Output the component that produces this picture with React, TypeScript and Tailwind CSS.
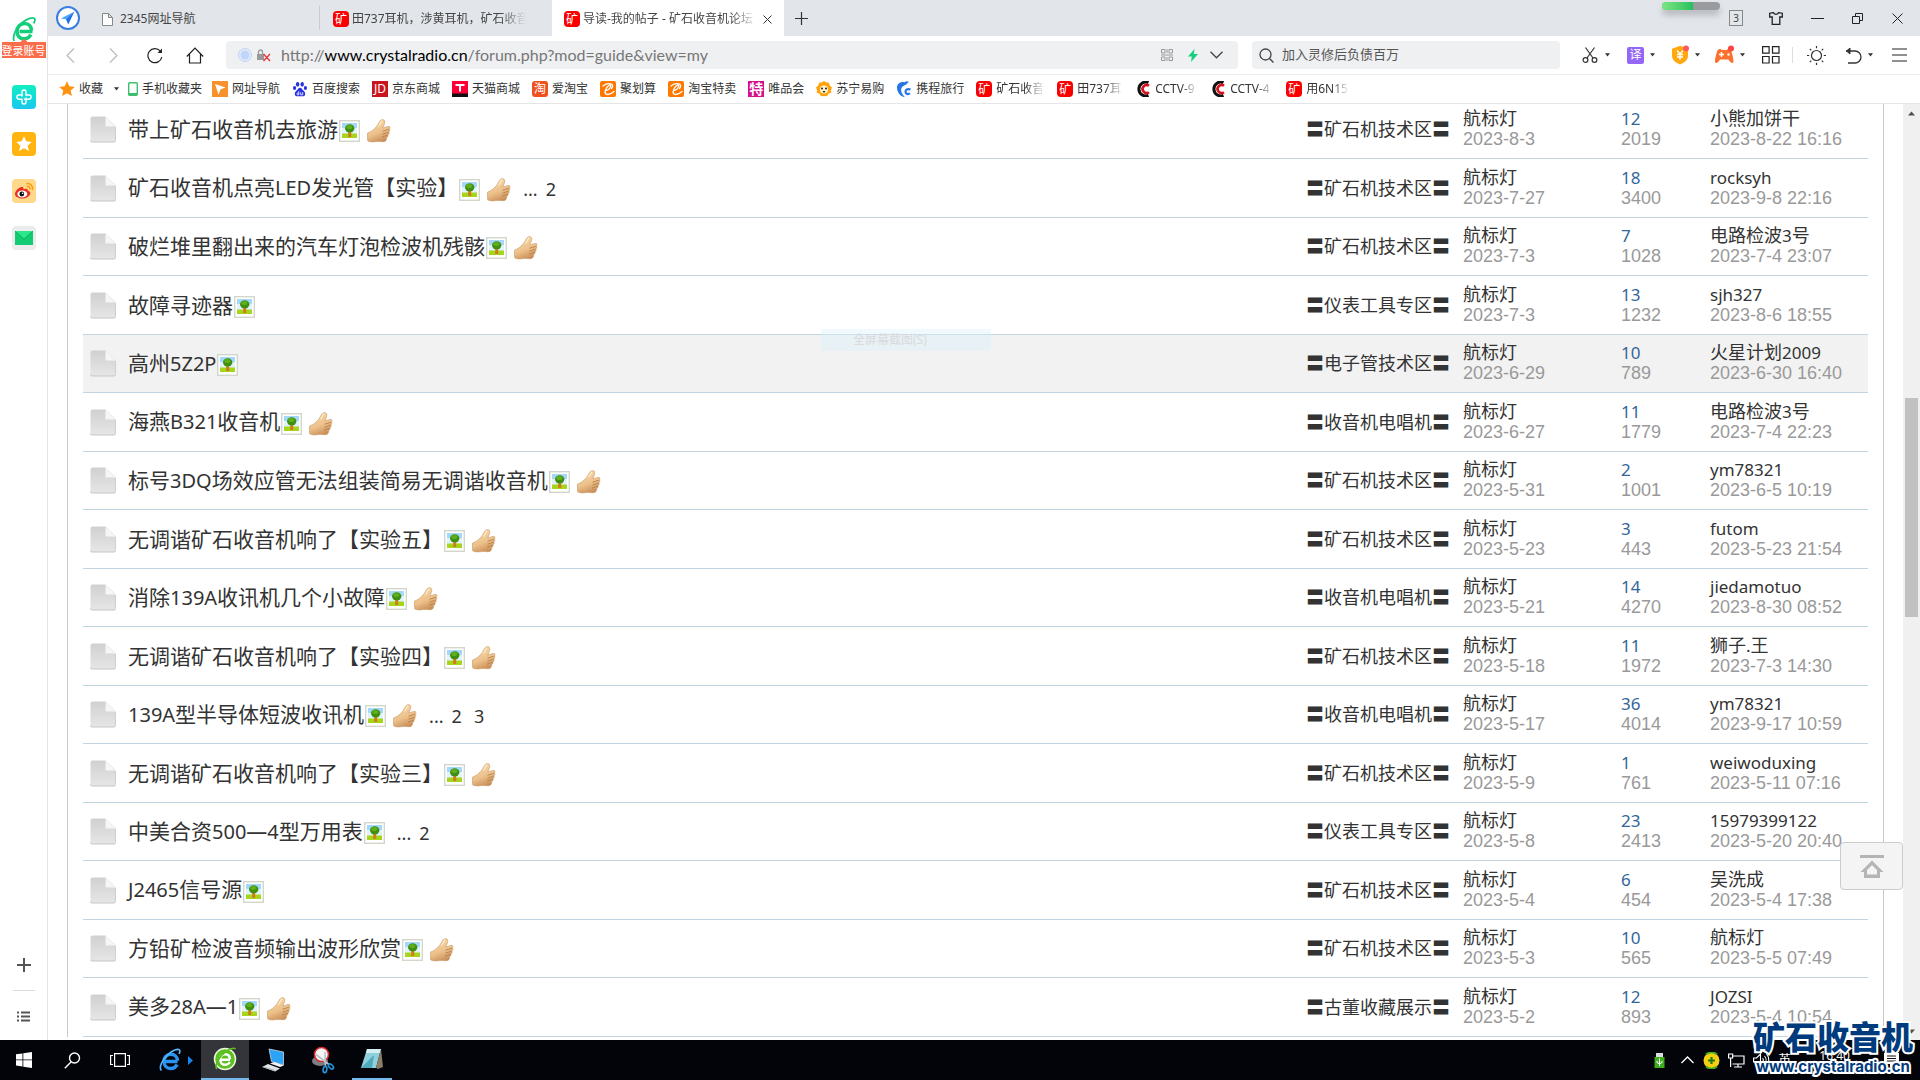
import React from "react";

const CJK = "font-['Noto_Sans','Noto_Sans_CJK_SC',sans-serif]";

type Thread = {
  title: string;
  thumb?: boolean;
  pages?: string[];
  area: string;
  date: string;
  replies: string;
  views: string;
  last: string;
  lastTime: string;
  active?: boolean;
};

const threads: Thread[] = [
  { title: "带上矿石收音机去旅游", thumb: true, area: "矿石机技术区", date: "2023-8-3", replies: "12", views: "2019", last: "小熊加饼干", lastTime: "2023-8-22 16:16" },
  { title: "矿石收音机点亮LED发光管【实验】", thumb: true, pages: ["2"], area: "矿石机技术区", date: "2023-7-27", replies: "18", views: "3400", last: "rocksyh", lastTime: "2023-9-8 22:16" },
  { title: "破烂堆里翻出来的汽车灯泡检波机残骸", thumb: true, area: "矿石机技术区", date: "2023-7-3", replies: "7", views: "1028", last: "电路检波3号", lastTime: "2023-7-4 23:07" },
  { title: "故障寻迹器", area: "仪表工具专区", date: "2023-7-3", replies: "13", views: "1232", last: "sjh327", lastTime: "2023-8-6 18:55" },
  { title: "高州5Z2P", area: "电子管技术区", date: "2023-6-29", replies: "10", views: "789", last: "火星计划2009", lastTime: "2023-6-30 16:40", active: true },
  { title: "海燕B321收音机", thumb: true, area: "收音机电唱机", date: "2023-6-27", replies: "11", views: "1779", last: "电路检波3号", lastTime: "2023-7-4 22:23" },
  { title: "标号3DQ场效应管无法组装简易无调谐收音机", thumb: true, area: "矿石机技术区", date: "2023-5-31", replies: "2", views: "1001", last: "ym78321", lastTime: "2023-6-5 10:19" },
  { title: "无调谐矿石收音机响了【实验五】", thumb: true, area: "矿石机技术区", date: "2023-5-23", replies: "3", views: "443", last: "futom", lastTime: "2023-5-23 21:54" },
  { title: "消除139A收讯机几个小故障", thumb: true, area: "收音机电唱机", date: "2023-5-21", replies: "14", views: "4270", last: "jiedamotuo", lastTime: "2023-8-30 08:52" },
  { title: "无调谐矿石收音机响了【实验四】", thumb: true, area: "矿石机技术区", date: "2023-5-18", replies: "11", views: "1972", last: "狮子.王", lastTime: "2023-7-3 14:30" },
  { title: "139A型半导体短波收讯机", thumb: true, pages: ["2", "3"], area: "收音机电唱机", date: "2023-5-17", replies: "36", views: "4014", last: "ym78321", lastTime: "2023-9-17 10:59" },
  { title: "无调谐矿石收音机响了【实验三】", thumb: true, area: "矿石机技术区", date: "2023-5-9", replies: "1", views: "761", last: "weiwoduxing", lastTime: "2023-5-11 07:16" },
  { title: "中美合资500—4型万用表", pages: ["2"], area: "仪表工具专区", date: "2023-5-8", replies: "23", views: "2413", last: "15979399122", lastTime: "2023-5-20 20:40" },
  { title: "J2465信号源", area: "矿石机技术区", date: "2023-5-4", replies: "6", views: "454", last: "吴洗成", lastTime: "2023-5-4 17:38" },
  { title: "方铅矿检波音频输出波形欣赏", thumb: true, area: "矿石机技术区", date: "2023-5-3", replies: "10", views: "565", last: "航标灯", lastTime: "2023-5-5 07:49" },
  { title: "美多28A—1", thumb: true, area: "古董收藏展示", date: "2023-5-2", replies: "12", views: "893", last: "JOZSI", lastTime: "2023-5-4 10:54" },
];

/* Sets Latin runs one step smaller than the Chinese text around them. */
function Mixed({ text, latin }: { text: string; latin: string }) {
  return (
    <>
      {text.split(/([\x21-\x7e]+)/).map((part, i) =>
        i % 2 ? <span key={i} className={latin}>{part}</span> : part
      )}
    </>
  );
}

function PageIcon() {
  return (
    <svg width="26" height="27" viewBox="0 0 26 27">
      <defs>
        <linearGradient id="pg" x1="0" y1="0" x2="0" y2="1">
          <stop offset="0" stopColor="#d0d0d0" />
          <stop offset="1" stopColor="#e6e6e6" />
        </linearGradient>
      </defs>
      <path d="M2.500 .5H15.500L25.500 10V24.500a1.500 1.500 0 0 1-1.500 1.500H2A1.500 1.500 0 0 1 .5 24.500V2.500a2 2 0 0 1 2-2Z" fill="url(#pg)" />
      <path d="M.5 24.500a1.500 1.500 0 0 0 1.500 1.500H24a1.500 1.500 0 0 0 1.500-1.500" fill="none" stroke="#c6c6c6" />
      <path d="M25.500 24V11" stroke="#cfcfcf" />
      <path d="M15.500 .5V10.500H25.500Z" fill="#f6f6f6" />
    </svg>
  );
}

function TreeIcon() {
  return (
    <svg width="21" height="22" viewBox="0 0 21 22" className="shrink-0">
      <rect x=".7" y=".7" width="19.600" height="20.600" fill="#fff" stroke="#d3d6cb" strokeWidth="1.400" />
      <rect x="3" y="3" width="15" height="7" fill="#a3d8fb" />
      <rect x="3" y="8" width="15" height="6" fill="#dff2fd" />
      <rect x="3" y="13.500" width="15" height="4.500" fill="#a6d51b" />
      <path d="M9.200 11h3v6h-3z" fill="#cf7d1a" />
      <ellipse cx="10.700" cy="8.300" rx="4.700" ry="4" fill="#3f8f10" />
      <ellipse cx="10.300" cy="7" rx="3" ry="2" fill="#5fae1c" />
    </svg>
  );
}

function ThumbIcon() {
  return (
    <svg width="24" height="24" viewBox="0 0 24 24" className="ml-[7px] shrink-0">
      <defs>
        <linearGradient id="th" x1=".2" y1="0" x2=".6" y2="1">
          <stop offset="0" stopColor="#f8dcae" />
          <stop offset=".6" stopColor="#ecc08a" />
          <stop offset="1" stopColor="#c98d58" />
        </linearGradient>
      </defs>
      <path d="M.6 14C4 12.800 7 10.500 9.500 7.500 11.300 5.300 12.500 .6 15.500 .6c2.300 0 2.700 2 2 4.200L15.800 9l5.200-1.600c2-.4 2.600 1.500 1.400 2.600.8 1 .4 2.200-.5 2.900.6 1.100.1 2.300-.9 2.800.4 1.300-.2 2.200-1.200 2.700-.2 1.900-.6 3.600-2 4-2.500.8-5.500-.2-8.500.2-3.300.5-6 .5-8.500-.6C.3 19.500.2 16.500.6 14Z" fill="url(#th)" stroke="#c08c54" strokeWidth=".5" />
      <path d="M15.500 12.200l6.500-2M15.500 15.200l6-2.100M15 18.100l5.700-2" stroke="#b9814a" strokeWidth=".9" fill="none" />
      <path d="M11.500 7.500c1.500-2 2.500-5 3.600-5.700" stroke="#fdeccb" strokeWidth="1.200" fill="none" />
    </svg>
  );
}

function OreIcon() {
  return (
    <span className="flex h-4 w-4 shrink-0 items-center justify-center rounded-[4px] bg-[#fa0000] text-[12px] leading-none text-white font-['Noto_Sans_CJK_SC',sans-serif]">
      矿
    </span>
  );
}

function Caret() {
  return (
    <svg width="5" height="4" viewBox="0 0 5 4" className="shrink-0">
      <path d="M0 .3h5L2.500 3.600Z" fill="#333" />
    </svg>
  );
}

function Glyph({ bg, children, size = "text-[12px]" }: { bg: string; children: React.ReactNode; size?: string }) {
  return <span className={`flex h-4 w-4 shrink-0 items-center justify-center leading-none text-white ${size} ${bg}`}>{children}</span>;
}

function AliIcon() {
  return (
    <svg width="16" height="16" viewBox="0 0 16 16">
      <rect width="16" height="16" rx="2" fill="#ff7800" />
      <path d="M14 10.500c-2.500 2.200-6 3.500-7.800 2.600C3.500 11.800 6.500 5.500 9 4.300c1.600-.6 2.200.4 1.200 2.200-.8 1.400-2 2.600-3.600 2.900M3 5c2-1.600 6-3 9-1.600 1 .8.500 2.600-.6 4.200" fill="none" stroke="#fff" strokeWidth="1.300" strokeLinecap="round" />
    </svg>
  );
}

function CctvIcon() {
  return (
    <svg width="16" height="16" viewBox="0 0 16 16">
      <path d="M13.500 1.500A7 7 0 1 0 13.500 14.500" fill="none" stroke="#111" strokeWidth="3" />
      <path d="M14 4.800A4 4 0 1 0 14 11.200" fill="none" stroke="#d8121d" strokeWidth="2.600" />
    </svg>
  );
}

const bookmarks: { icon: React.ReactNode; label: string; cut?: string }[] = [
  {
    label: "网址导航",
    icon: (
      <svg width="16" height="16" viewBox="0 0 16 16"><rect width="16" height="16" fill="#f7912b" /><path d="M3 3l10.500 3.600-5 1.900-2 5Z" fill="#fff" /></svg>
    ),
  },
  {
    label: "百度搜索",
    icon: (
      <svg width="16" height="16" viewBox="0 0 16 16" fill="#2932e1">
        <ellipse cx="5.600" cy="3.300" rx="1.700" ry="2.400" /><ellipse cx="10.200" cy="3.300" rx="1.700" ry="2.400" />
        <ellipse cx="2.600" cy="7" rx="1.600" ry="2.100" /><ellipse cx="13.400" cy="7" rx="1.600" ry="2.100" />
        <path d="M8 6.800c1.600 0 2.200 1.700 3.300 2.800 1.500 1.300 2.400 2.600 1.700 4.400-.8 2-3.200 1.200-5 1.200s-4.200.8-5-1.200c-.7-1.800.2-3.100 1.700-4.400C5.800 8.500 6.400 6.800 8 6.800Z" />
        <path d="M6.800 10.200v3.600H5.200v-1.700h1.600M8.700 11.200v2.600h2v-2.600" stroke="#fff" strokeWidth=".8" fill="none" />
      </svg>
    ),
  },
  { label: "京东商城", icon: <Glyph bg="bg-[#c9151e]">JD</Glyph> },
  {
    label: "天猫商城",
    icon: (
      <svg width="16" height="16" viewBox="0 0 16 16"><rect width="16" height="16" fill="#ff0036" /><path d="M0 12.500h16V16H0z" fill="#111" /><path d="M3.500 3h9v2H9v5.500H7V5H3.500z" fill="#fff" /></svg>
    ),
  },
  { label: "爱淘宝", icon: <Glyph bg="rounded-[3px] bg-[#f0501e]">淘</Glyph> },
  { label: "聚划算", icon: <AliIcon /> },
  { label: "淘宝特卖", icon: <AliIcon /> },
  { label: "唯品会", icon: <Glyph bg="bg-[#d6108c] font-bold" size="text-[14px]">特</Glyph> },
  {
    label: "苏宁易购",
    icon: (
      <svg width="16" height="16" viewBox="0 0 16 16">
        <path d="M8 0l2.200 1.600L13 1.800l.7 2.700L16 6.500 15 9l.2 2.800-2.700 1L11 15.200 8 15l-3 .2-1.500-2.400-2.700-1L1 9 0 6.500l2.300-2L3 1.800l2.800-.2Z" fill="#fda30c" />
        <circle cx="8" cy="8.500" r="4" fill="#fff3d0" /><circle cx="6" cy="7.500" r="1" fill="#222" /><circle cx="10" cy="7.500" r="1" fill="#222" /><path d="M6.500 10h3L8 12Z" fill="#222" />
      </svg>
    ),
  },
  {
    label: "携程旅行",
    icon: (
      <svg width="16" height="16" viewBox="0 0 16 16">
        <path d="M1 6.500C1 2.500 5 .2 8.500 1.200 10 .2 11.500 0 13 1c-1 .3-1.600.8-1.800 1.600C9.500 5 6 4.500 5.200 8c-.5 2.800 1 5.500 3.600 8C4 15.500 1 11 1 6.500Z" fill="#2577e3" />
        <path d="M14.500 8.500c-2-1-5-.2-5 2.300 0 2.200 2.400 2.800 4.500 1.600" fill="none" stroke="#2577e3" strokeWidth="2.200" />
      </svg>
    ),
  },
  { label: "矿石收音", cut: "w-[49px]", icon: <OreIcon /> },
  { label: "田737耳", cut: "w-[46px]", icon: <OreIcon /> },
  { label: "CCTV-9", cut: "w-[43px]", icon: <CctvIcon /> },
  { label: "CCTV-4", cut: "w-[44px]", icon: <CctvIcon /> },
  { label: "用6N15", cut: "w-[43px]", icon: <OreIcon /> },
];

const fade = "overflow-hidden whitespace-nowrap [mask-image:linear-gradient(to_right,#000_60%,transparent)]";
const tabFade = "overflow-hidden whitespace-nowrap [mask-image:linear-gradient(to_right,#000_85%,transparent)]";

function Sidebar() {
  return (
    <aside className="flex w-12 shrink-0 flex-col items-center border-r border-[#e2e3e6] bg-white">
      <a href="#login" className="relative z-10 mt-4 flex flex-col items-center">
        <svg width="24" height="26" viewBox="0 0 24 26">
          <path d="M20.500 15.500H7.500M18.800 18.500c-1.500 3-4 4.300-6.600 4.300-4.700 0-7.200-3.600-7.200-7.600C5 10.800 8.200 7.500 12.400 7.500c4.600 0 7 3 7.100 7" fill="none" stroke="#13ce7b" strokeWidth="3.600" />
          <path d="M2 25C.2 20 4 11.500 11 6 15.500 2.500 20.500.8 22.300 2.500c1 1 .6 3-.6 5" fill="none" stroke="#13ce7b" strokeWidth="1.800" />
          <path d="M8.500 26L12 22.800 15.500 26Z" fill="#fb6c4b" />
        </svg>
        <span className="flex h-4 w-11 items-center justify-center whitespace-nowrap bg-[#fb6c4b] text-[11px] leading-none text-white">登录账号</span>
      </a>
      <nav className="mt-[27px] flex flex-col gap-[23px]">
        <button aria-label="健康" className="flex h-6 w-6 items-center justify-center rounded-[4px] bg-linear-to-b from-[#12eec0] to-[#1dc7ef]">
          <svg width="18" height="18" viewBox="0 0 18 18" fill="none" stroke="#fff" strokeWidth="1.400">
            <path d="M7 8.500V4a2 2 0 0 1 4 0v3H14a2 2 0 0 1 0 4.200H9M11 9.500V14a2 2 0 0 1-4 0v-2.800H4A2 2 0 0 1 4 7h4" />
          </svg>
        </button>
        <button aria-label="收藏夹" className="flex h-6 w-6 items-center justify-center rounded-[4px] bg-[#ffb40f]">
          <svg width="16" height="16" viewBox="0 0 16 16"><path d="M8 .3l2.300 5 5.500.6-4.100 3.700 1.200 5.400L8 12.300 3.100 15l1.200-5.400L.2 5.900l5.500-.6Z" fill="#fff" /></svg>
        </button>
        <button aria-label="微博" className="flex h-6 w-6 items-center justify-center rounded-[4px] bg-[#ffd88a]">
          <svg width="20" height="20" viewBox="0 0 20 20">
            <path d="M1 13c0-3.300 4.500-7.500 7.300-7 1.300.2 1.400 1.300 1 2.300 2-.9 4.900-.8 4.600 1.500 2 .6 2.900 1.600 2.300 3.200C15.400 15.500 12 17.500 8.500 17.500S1 15.900 1 13Z" fill="#e62e24" />
            <ellipse cx="8.300" cy="13" rx="5" ry="3.500" fill="#fff" /><circle cx="7.800" cy="13" r="2.400" fill="#111" /><circle cx="8.600" cy="12.200" r=".8" fill="#fff" />
            <path d="M12.800 5.500c2-.5 3.500 1 3 3M12.500 2.600c3.700-.7 6.800 2.200 6 6.200" fill="none" stroke="#f90" strokeWidth="1.500" />
          </svg>
        </button>
        <button aria-label="邮箱" className="flex h-6 w-6 items-center justify-center rounded-[4px] bg-[#ececec]">
          <svg width="18" height="14" viewBox="0 0 18 14"><path d="M0 0h18v14H0z" fill="#12cb72" /><path d="M0 0h18L9 8Z" fill="#2be88b" /><path d="M0 0l9 8 9-8" fill="none" stroke="#0aa65a" strokeWidth=".8" /></svg>
        </button>
      </nav>
      <button aria-label="添加" className="mt-auto mb-[18px]">
        <svg width="14" height="14" viewBox="0 0 14 14"><path d="M7 0v14M0 7h14" stroke="#555" strokeWidth="2" /></svg>
      </button>
      <hr className="w-[22px] border-[#dcdcdc]" />
      <button aria-label="列表" className="mt-5 mb-[18px]">
        <svg width="13" height="11" viewBox="0 0 13 11"><path d="M0 1.500h2M4 1.500h9M0 5.500h2M4 5.500h9M0 9.500h2M4 9.500h9" stroke="#555" strokeWidth="2" /></svg>
      </button>
    </aside>
  );
}

function TabBar() {
  return (
    <header className="flex h-9 shrink-0 items-center bg-[#e2e5ea] text-[12px] text-[#444]">
      <button aria-label="导航" className="ml-2 flex h-6 w-6 items-center justify-center rounded-full border-2 border-[#3a7de0] bg-white">
        <svg width="14" height="14" viewBox="0 0 14 14"><path d="M13.500 .5L0 7.500l5 .8Z" fill="#49a3fb" /><path d="M13.500 .5L5 8.300l2.200 5.200Z" fill="#1d6fe8" /></svg>
      </button>
      <button className="ml-[22px] flex h-6 w-[218px] items-center gap-[7px] border-r border-[#c9ccd1] pt-0.5">
        <svg width="11" height="13" viewBox="0 0 11 13"><path d="M.5 .5h6l4 4v8H.5zM6.500 .5v4h4" fill="#fff" stroke="#888" /></svg>
        2345网址导航
      </button>
      <button className="flex h-9 w-[232px] items-center pt-0.5 pl-[13px]">
        <OreIcon />
        <span className={`ml-[3px] w-[174px] text-left ${tabFade}`}>田737耳机，涉黄耳机，矿石收音</span>
      </button>
      <div className="flex h-9 w-[232px] items-center bg-white pt-0.5 pl-3">
        <OreIcon />
        <span className={`ml-[3px] w-[174px] ${tabFade}`}>导读-我的帖子 - 矿石收音机论坛</span>
        <button aria-label="关闭标签" className="ml-[6px]">
          <svg width="9" height="9" viewBox="0 0 9 9"><path d="M.5 .5l8 8M8.500 .5l-8 8" stroke="#333" /></svg>
        </button>
      </div>
      <button aria-label="新标签" className="ml-[11px]">
        <svg width="13" height="13" viewBox="0 0 13 13"><path d="M6.500 0v13M0 6.500h13" stroke="#333" strokeWidth="1.200" /></svg>
      </button>
      <div className="mr-[9px] mb-6 ml-auto h-2 w-[58px] rounded-full bg-[#9a9b9e] shadow-[0_5px_6px_rgba(0,0,0,0.2)]">
        <div className="h-full w-[31px] rounded-l-full bg-linear-to-r from-[#7ae582] to-[#1fc15f]" />
      </div>
      <div className="flex items-center">
        <button className="flex h-4 w-[14px] items-center justify-center border border-[#888] text-[10px] leading-none">3</button>
        <button aria-label="皮肤" className="ml-[26px]">
          <svg width="14" height="13" viewBox="0 0 14 13"><path d="M4.500 .7L.7 1.200v3.800h2.500v7.300h7.600v-7.300h2.500V1.200L9.500.7C9 2.800 5 2.800 4.500.7Z" fill="none" stroke="#222" strokeWidth="1.300" /></svg>
        </button>
        <button aria-label="最小化" className="ml-7">
          <svg width="13" height="9" viewBox="0 0 13 9"><path d="M0 4.500h13" stroke="#222" /></svg>
        </button>
        <button aria-label="还原" className="ml-7">
          <svg width="12" height="11" viewBox="0 0 12 11"><path d="M.5 3.500h7v7h-7zM3.500 3.500v-3h7v7h-3" fill="none" stroke="#222" /></svg>
        </button>
        <button aria-label="关闭" className="mr-[17px] ml-7">
          <svg width="11" height="11" viewBox="0 0 11 11"><path d="M.5 .5l10 10M10.500 .5l-10 10" stroke="#222" /></svg>
        </button>
      </div>
    </header>
  );
}

function AddressBar() {
  return (
    <div className="flex h-[39px] shrink-0 items-center border-b border-[#ececec] bg-white">
      <div className="flex w-[178px] shrink-0 items-center">
        <button aria-label="后退" className="ml-[18px]">
          <svg width="9" height="15" viewBox="0 0 9 15"><path d="M8 .5l-7 7 7 7" fill="none" stroke="#bbb" strokeWidth="1.200" /></svg>
        </button>
        <button aria-label="前进" className="ml-[34px]">
          <svg width="9" height="15" viewBox="0 0 9 15"><path d="M1 .5l7 7-7 7" fill="none" stroke="#bbb" strokeWidth="1.200" /></svg>
        </button>
        <button aria-label="刷新" className="ml-7">
          <svg width="18" height="17" viewBox="0 0 18 17"><path d="M15.800 10a7 7 0 1 1-1.500-5.800" fill="none" stroke="#222" strokeWidth="1.200" /><path d="M16 1.500v4.500h-4.500Z" fill="#222" /></svg>
        </button>
        <button aria-label="主页" className="ml-[22px]">
          <svg width="18" height="17" viewBox="0 0 18 17"><path d="M.8 9.500L9 1l8.200 8.500M3.500 7v9h11V7" fill="none" stroke="#222" strokeWidth="1.200" /></svg>
        </button>
      </div>
      <div className="flex h-7 flex-1 items-center rounded-[4px] bg-[#eff0f2] px-3">
        <svg width="14" height="14" viewBox="0 0 14 14" className="shrink-0"><circle cx="7" cy="7" r="6.500" fill="#e3ecfa" stroke="#bdd3f5" /><circle cx="7" cy="7" r="4.500" fill="#bfd5fa" /></svg>
        <svg width="14" height="13" viewBox="0 0 14 13" className="ml-[5px] shrink-0">
          <path d="M0 5h7v6H0z" fill="#999" /><path d="M1.500 5V3a2 2 0 0 1 4 0v2" fill="none" stroke="#999" strokeWidth="1.300" /><path d="M6.500 5l6.500 7M13 5L6.500 12" stroke="#e23b3b" strokeWidth="1.400" />
        </svg>
        <div role="textbox" aria-label="地址" className="ml-[10px] flex-1 whitespace-nowrap text-[16px] leading-6 text-[#777] font-['Lato',sans-serif]">
          http://<span className="text-black">www.crystalradio.cn</span>/forum.php?mod=guide&amp;view=my
        </div>
        <svg width="12" height="12" viewBox="0 0 12 12"><path d="M.5 .5h3.500v3.500H.5zM8 .5h3.500v3.500H8zM.5 8h3.500v3.500H.5zM8 8h3.500v3.500H8zM6 0v4M6 8v4M0 6h12" fill="none" stroke="#999" /></svg>
        <svg width="10" height="13" viewBox="0 0 10 13" className="ml-[15px]"><path d="M6.500 0L0 7.500h3.800L3 13l7-8H5.800Z" fill="#13d07a" /></svg>
        <button aria-label="展开" className="mr-[3px] ml-3">
          <svg width="13" height="8" viewBox="0 0 13 8"><path d="M.5 .8l6 6 6-6" fill="none" stroke="#444" strokeWidth="1.300" /></svg>
        </button>
      </div>
      <label className="ml-[14px] flex h-7 w-[308px] shrink-0 items-center rounded-[4px] bg-[#eff0f2] pl-[7px]">
        <svg width="15" height="15" viewBox="0 0 15 15"><circle cx="6.500" cy="6.500" r="5.500" fill="none" stroke="#444" strokeWidth="1.300" /><path d="M10.500 10.500l4 4" stroke="#444" strokeWidth="1.300" /></svg>
        <input aria-label="搜索" defaultValue="加入灵修后负债百万" className="ml-2 w-[240px] bg-transparent text-[13px] text-[#555] outline-none" />
      </label>
      <div className="ml-[22px] flex w-[338px] shrink-0 items-center">
        <button aria-label="截图" className="flex items-center gap-[7px]">
          <svg width="16" height="16" viewBox="0 0 16 16" fill="none" stroke="#333" strokeWidth="1.200"><path d="M3.500 .5l7.500 10.500M12.500 .5L5 11" /><circle cx="3.500" cy="13" r="2.400" /><circle cx="12.500" cy="13" r="2.400" /></svg>
          <Caret />
        </button>
        <button aria-label="翻译" className="ml-[17px] flex items-center gap-[6px]">
          <span className="flex h-[17px] w-[17px] items-center justify-center rounded-[2px] bg-[#9467f7] text-[12px] leading-none text-white">译</span>
          <Caret />
        </button>
        <button aria-label="省钱" className="ml-[16px] flex items-center gap-[6px]">
          <svg width="18" height="20" viewBox="0 0 18 20"><path d="M9 .8l8 3v7c0 4.500-4 7-8 8.700-4-1.700-8-4.200-8-8.700v-7Z" fill="#ffa90e" /><path d="M6 5.500L9 9l3-3.500M9 9v6M6 9.500h6M6 12h6" fill="none" stroke="#fff" strokeWidth="1.300" /><circle cx="15" cy="3.500" r="3" fill="#ff5a5a" /></svg>
          <Caret />
        </button>
        <button aria-label="游戏" className="ml-[14px] flex items-center gap-[5px]">
          <svg width="21" height="20" viewBox="0 0 21 20"><path d="M3.800 5C5 3.500 7 4 8 5h4.500c1-1 3-1.500 4.200 0 1.500 3 3 9.500 2.800 12-1 2-3 1-5-2.500H6C4 18 2 19 1 17 .8 14.500 2.300 8 3.800 5Z" fill="#fb702d" /><path d="M7.500 7v5M5 9.500h5" stroke="#fff" strokeWidth="1.500" /><circle cx="14.500" cy="9.500" r="1.200" fill="#fff" /><circle cx="17" cy="3.500" r="3" fill="#ff4444" /></svg>
          <Caret />
        </button>
        <button aria-label="应用" className="ml-[17px]">
          <svg width="18" height="18" viewBox="0 0 18 18"><path d="M.6 .6h6.500v6.500H.6zM10.500 .6H17v6.500h-6.500zM.6 10.500h6.500V17H.6zM10.500 10.500H17V17h-6.500z" fill="none" stroke="#222" strokeWidth="1.200" /></svg>
        </button>
        <span className="ml-3 h-4 w-px bg-[#ddd]" />
        <button aria-label="夜间模式" className="ml-[14px]">
          <svg width="19" height="19" viewBox="0 0 19 19" fill="none" stroke="#333" strokeWidth="1.200"><circle cx="9.500" cy="9.500" r="5" /><path d="M9.500 0v2.200M9.500 16.800V19M0 9.500h2.200M16.800 9.500H19M2.800 2.800l1.500 1.500M14.700 14.700l1.500 1.500M2.800 16.200l1.500-1.500M14.700 4.300l1.500-1.500" /></svg>
        </button>
        <button aria-label="恢复" className="ml-[19px] flex items-center gap-[6px]">
          <svg width="17" height="17" viewBox="0 0 17 17"><path d="M1 4h9a6 6 0 0 1 0 12H3" fill="none" stroke="#333" strokeWidth="1.300" /><path d="M5 1L1.500 4l3.500 3Z" fill="#333" stroke="#333" /></svg>
          <Caret />
        </button>
        <button aria-label="菜单" className="ml-[19px]">
          <svg width="15" height="14" viewBox="0 0 15 14"><path d="M0 1h15M0 7h15M0 13h15" stroke="#222" strokeWidth="1.200" /></svg>
        </button>
      </div>
    </div>
  );
}

function BookmarkBar() {
  return (
    <nav className="flex h-[29px] shrink-0 items-center border-b border-[#e6e6e6] bg-white pl-[11px] text-[12px] text-[#333]">
      <button className="flex items-center gap-1">
        <svg width="16" height="16" viewBox="0 0 16 16"><path d="M8 .3l2.300 5 5.500.6-4.100 3.700 1.200 5.400L8 12.300 3.100 15l1.200-5.400L.2 5.900l5.500-.6Z" fill="#ff9110" /></svg>
        收藏
        <span className="ml-[7px]"><Caret /></span>
      </button>
      <a href="#mobile" className="ml-[9px] flex items-center gap-[4px]">
        <svg width="10" height="14" viewBox="0 0 10 14"><rect x=".7" y=".7" width="8.600" height="12.600" rx="1" fill="#fff" stroke="#3cbf6c" strokeWidth="1.400" /><path d="M1 11h8v2.500H1z" fill="#3cbf6c" /></svg>
        手机收藏夹
      </a>
      <div className="ml-[10px] flex items-center gap-3">
        {bookmarks.map((b) => (
          <a key={b.label} href="#bookmark" className="flex items-center gap-1">
            {b.icon}
            <span className={b.cut ? `${b.cut} ${fade}` : "whitespace-nowrap"}>{b.label}</span>
          </a>
        ))}
      </div>
    </nav>
  );
}

function ThreadTable() {
  return (
    <table className="-mt-[3px] w-full table-fixed border-separate border-spacing-0 text-left text-[#333]">
      <colgroup>
        <col className="w-[45px]" />
        <col />
        <col className="w-[157px]" />
        <col className="w-[158px]" />
        <col className="w-[89px]" />
        <col className="w-[158px]" />
      </colgroup>
      <tbody className="[&_td]:border-b [&_td]:border-[#c2d5e3] [&_td]:p-0 [&_td]:align-middle">
        {threads.map((t, i) => (
          <tr key={i} className={`odd:h-[58px] even:h-[59px] ${t.active ? "bg-[#f2f2f2]" : ""}`}>
            <td className="pl-[7px]!"><PageIcon /></td>
            <td>
              <div className="flex items-center pb-px whitespace-nowrap text-[21px] leading-7">
                <a href="#thread" className="mr-px"><Mixed text={t.title} latin="text-[20px]" /></a>
                <span className="flex items-center pt-1">
                  <TreeIcon />
                  {t.thumb && <ThumbIcon />}
                </span>
                {t.pages && (
                  <span className="ml-3 flex gap-3 pt-[3px] text-[18px]">
                    <span className="flex gap-2"><span>...</span><a href="#page">{t.pages[0]}</a></span>
                    {t.pages.slice(1).map((p) => <a key={p} href="#page">{p}</a>)}
                  </span>
                )}
              </div>
            </td>
            <td className="pb-px! whitespace-nowrap text-[18px] leading-6"><a href="#area">〓{t.area}〓</a></td>
            <td><TwoLines top={<a href="#user">航标灯</a>} bottom={t.date} /></td>
            <td><TwoLines top={<a href="#thread" className="text-[17px] text-[#336699]">{t.replies}</a>} bottom={t.views} /></td>
            <td><TwoLines top={<a href="#user"><Mixed text={t.last} latin="text-[17px]" /></a>} bottom={t.lastTime} /></td>
          </tr>
        ))}
      </tbody>
    </table>
  );
}

function TwoLines({ top, bottom }: { top: React.ReactNode; bottom: string }) {
  return (
    <div className="flex flex-col pb-px whitespace-nowrap text-[18px] leading-5">
      <span className="h-5 leading-[18px]">{top}</span>
      <span className="h-5 text-[#999] font-['Liberation_Sans',sans-serif]">{bottom}</span>
    </div>
  );
}

function Taskbar() {
  return (
    <footer className="flex h-10 shrink-0 items-center bg-[#02040a]">
      <button aria-label="开始" className="flex h-10 w-12 items-center justify-center">
        <svg width="16" height="16" viewBox="0 0 16 16" fill="#fff"><path d="M0 2.300l6.500-.9v6.100H0zM7.300 1.300L16 0v7.500H7.300zM0 8.300h6.500v6.200L0 13.600zM7.300 8.300H16V16l-8.700-1.300z" /></svg>
      </button>
      <button aria-label="搜索" className="flex h-10 w-12 items-center justify-center">
        <svg width="17" height="17" viewBox="0 0 17 17" fill="none" stroke="#fff" strokeWidth="1.400"><circle cx="10.500" cy="6" r="5" /><path d="M7 10L.8 16.200" /></svg>
      </button>
      <button aria-label="任务视图" className="flex h-10 w-12 items-center justify-center">
        <svg width="20" height="14" viewBox="0 0 20 14" fill="none" stroke="#fff" strokeWidth="1.200"><path d="M4.600 .6h10.800v12.800H4.600zM3 2.500H.6v9H3M17 2.500h2.400v9H17" /></svg>
      </button>
      <button aria-label="Internet Explorer" className="ml-[15px] flex h-10 w-[42px] items-center gap-[7px]">
        <svg width="22" height="24" viewBox="0 0 22 24"><path d="M18.500 13.500H5.500M18 16.500c-1 2.300-3.200 4-6.200 4-4 0-6.800-2.800-6.800-7.200 0-4 3-7 6.800-7 4 0 6.600 3 6.700 6.500" fill="none" stroke="#2a93ef" strokeWidth="3.400" /><path d="M2.500 22.500C-.5 20 3 11.500 9 6.500 13.500 2.500 19 .3 20.500 2c.7 1 .3 2.500-.4 4" fill="none" stroke="#58b7fa" strokeWidth="1.600" /></svg>
        <svg width="5" height="9" viewBox="0 0 5 9"><path d="M0 0l5 4.500L0 9Z" fill="#1686ea" /></svg>
      </button>
      <button aria-label="浏览器" className="flex h-10 w-12 items-center justify-center border-b-2 border-[#76b9ed] bg-[#33353b]">
        <svg width="24" height="24" viewBox="0 0 24 24"><circle cx="12" cy="12" r="10.500" fill="#5dc021" stroke="#e9f7dd" strokeWidth="1.500" /><path d="M17 12.800H7.500M16.800 15c-1 1.800-2.500 2.800-4.600 2.800-3 0-5-2.200-5-5.200 0-3.200 2.200-5.400 5-5.400 3 0 4.700 2 4.800 5" fill="none" stroke="#fff" strokeWidth="2.400" /><path d="M4 22C1 19 6 9 13 4.500 17 2 21 .5 22.500 2" fill="none" stroke="#5dc021" strokeWidth="1.600" /></svg>
      </button>
      <button aria-label="此电脑" className="flex h-10 w-[49px] items-center justify-center">
        <svg width="24" height="26" viewBox="0 0 24 26"><path d="M7 2L21.500 5v13L9.500 14.500Z" fill="#2ba3f7" stroke="#c9d6df" strokeWidth=".8" /><path d="M8 16.500L12 15l10 3.500-4 1.500Z" fill="#f1f3f5" /><path d="M0 20l6-3 12 4.500-5 3Z" fill="#dfe4e8" /><path d="M2 20l11 3.500" stroke="#a8b0b8" /></svg>
      </button>
      <button aria-label="截图工具" className="flex h-10 w-[49px] items-center justify-center">
        <svg width="24" height="28" viewBox="0 0 24 28"><ellipse cx="9" cy="15" rx="8" ry="5" fill="#7b7f85" /><circle cx="10.500" cy="8.500" r="7" fill="#f5f5f5" stroke="#d7262b" strokeWidth="1.600" /><path d="M5 8.500l13 10M14 6l.5 14" stroke="#b9c0c8" strokeWidth="1.600" /><ellipse cx="14" cy="23.500" rx="1.800" ry="3.200" fill="none" stroke="#2493d6" strokeWidth="1.700" transform="rotate(10 14 23.500)" /><ellipse cx="20" cy="20.500" rx="3" ry="1.800" fill="none" stroke="#2493d6" strokeWidth="1.700" transform="rotate(45 20 20.500)" /></svg>
      </button>
      <button aria-label="记事本" className="ml-[5px] flex h-10 w-10 items-center justify-center border-b-2 border-[#76b9ed]">
        <svg width="24" height="22" viewBox="0 0 24 22"><path d="M7 1h14l-5 19H1Z" fill="#8fd0dc" /><path d="M7 1h14l-1 4H6Z" fill="#d5eef2" /><path d="M21 1l2 18-5 2-2-1Z" fill="#8a7f66" /><path d="M1 20L14 7l-2 13Z" fill="#4fa9bb" /></svg>
      </button>
      <div className="mr-[21px] ml-auto flex items-center text-[13px] text-white">
        <svg width="11" height="15" viewBox="0 0 11 15"><path d="M2 0h7v4H2z" fill="#ddd" /><path d="M.5 4h10v11H.5z" fill="#3fae1e" /><path d="M5.500 5.500V13M3 8v1.500l2.500 1.500M8 8v1.500L5.500 11" stroke="#fff" fill="none" /></svg>
        <svg width="13" height="8" viewBox="0 0 13 8" className="ml-4"><path d="M.5 7l6-6 6 6" fill="none" stroke="#fff" strokeWidth="1.300" /></svg>
        <svg width="17" height="17" viewBox="0 0 17 17" className="ml-[9px]"><circle cx="8.500" cy="8.500" r="8" fill="#f6cf12" /><path d="M3 2.500a8 8 0 0 1 11 0M3 14.500a8 8 0 0 0 11 0" stroke="#3fae1e" strokeWidth="1.800" fill="none" /><path d="M8.500 5v7M5 8.500h7" stroke="#1b7d13" strokeWidth="2.200" /></svg>
        <svg width="17" height="15" viewBox="0 0 17 15" className="ml-2" fill="none" stroke="#fff" strokeWidth="1.200"><path d="M5 3h11v8H4.500M10 11v3M6 14h8M.6 1h4v4h-4zM2.600 5v9" /></svg>
        <svg width="17" height="14" viewBox="0 0 17 14" className="ml-2" fill="none" stroke="#fff" strokeWidth="1.100"><path d="M.6 5h2.900l4-4v12l-4-4H.6zM9.500 5a3 3 0 0 1 0 4M11.500 3a6 6 0 0 1 0 8M13.500 1a9 9 0 0 1 0 12" /></svg>
        <span className="ml-2">英</span>
        <span className="mb-2 ml-7 text-[12px]">16:40</span>
        <svg width="15" height="15" viewBox="0 0 15 15" className="ml-[34px]"><path d="M0 0h15v11H9l-3 4v-4H0z" fill="#fff" /><path d="M3 3h9M3 5.500h9M3 8h9" stroke="#111" /></svg>
      </div>
    </footer>
  );
}

export default function App() {
  return (
    <div lang="zh-CN" className={`relative flex h-screen flex-col overflow-hidden bg-white ${CJK}`}>
      <div className="flex min-h-0 flex-1">
        <Sidebar />
        <div className="flex min-w-0 flex-1 flex-col">
          <TabBar />
          <AddressBar />
          <BookmarkBar />
          <div className="flex min-h-0 flex-1">
            <main className="relative min-w-0 flex-1 overflow-hidden px-[19px]">
              <div className="h-full border-x border-[#c8c8c8] px-[15px]">
                <ThreadTable />
              </div>
              <div className="absolute top-[225px] left-[773px] h-[22px] w-[170px] bg-[#daf0fa]/40 pl-8 text-[12px] leading-[22px] text-[#d9d9dc]">全屏幕截图(S)</div>
              <button aria-label="返回顶部" className="absolute right-0 bottom-[150px] flex h-12 w-[63px] items-center justify-center rounded-[4px] border border-[#cccccc] bg-[#f4f4f4]">
                <svg width="24" height="23" viewBox="0 0 24 23"><path d="M0 1.500h24" stroke="#b4b4b4" strokeWidth="3" /><path d="M12 5.500L23.500 17H20v6H4v-6H.5ZM12 10l-5 5v4.500h10V15Z" fill="#b4b4b4" fillRule="evenodd" /></svg>
              </button>
            </main>
            <div className="flex w-[17px] shrink-0 flex-col items-center bg-[#f0f0f0]">
              <svg width="7" height="5" viewBox="0 0 7 5" className="mt-[7px] shrink-0"><path d="M0 4.500L3.500 .5 7 4.500Z" fill="#505050" /></svg>
              <div className="mt-[282px] h-[219px] w-[13px] bg-[#c1c1c1]" />
              <svg width="7" height="5" viewBox="0 0 7 5" className="mt-auto mb-[6px] shrink-0"><path d="M0 .5h7L3.500 4.500Z" fill="#505050" /></svg>
            </div>
          </div>
        </div>
      </div>
      <Taskbar />
      <div className="absolute right-[7px] bottom-[3px] flex flex-col items-center font-bold text-[#003c7d] [-webkit-text-stroke:4px_#fff] [paint-order:stroke_fill]">
        <span className="text-[32px] leading-10 font-black">矿石收音机</span>
        <span className="text-[15px] leading-5 font-['Inter',sans-serif]">www.crystalradio.cn</span>
      </div>
    </div>
  );
}
